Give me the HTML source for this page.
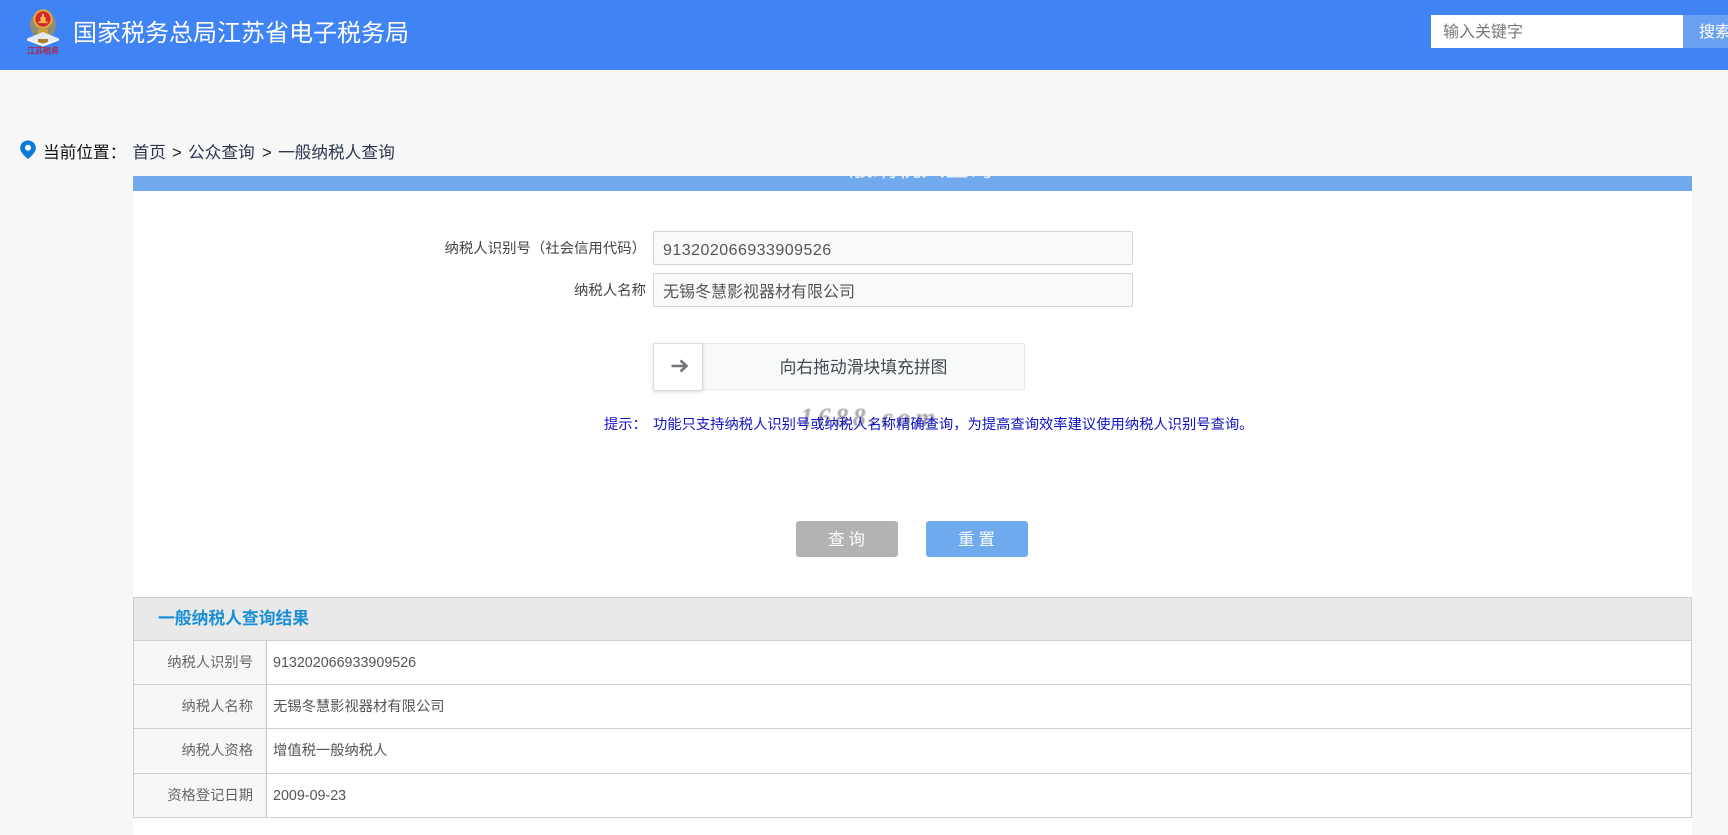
<!DOCTYPE html>
<html lang="zh-CN">
<head>
<meta charset="utf-8">
<title>一般纳税人查询</title>
<style>
*{box-sizing:border-box;margin:0;padding:0}
html,body{width:1728px;height:835px;overflow:hidden;background:#f7f7f7;font-family:"Liberation Sans","Noto Sans CJK SC",sans-serif}
.a{position:absolute;white-space:nowrap}
.header{left:0;top:0;width:1728px;height:70px;background:#4083f4}
.title{left:73px;top:19px;height:30px;line-height:30px;font-size:24px;color:#fff}
.search{left:1431px;top:15px;width:252px;height:33px;background:#fff;color:#777;font-size:16px;line-height:35px;padding-left:12px}
.sbtn{left:1683px;top:15px;width:45px;height:33px;background:#6aa0f0;color:#fff;font-size:16px;line-height:35px;padding-left:16px;overflow:hidden}
.crumb{top:141px;height:24px;line-height:24px;font-size:16.7px;color:#2c3550}
.panel{left:133px;top:176px;width:1559px;height:659px;background:#fff}
.bar{left:133px;top:176px;width:1559px;height:15px;background:#70aaec;overflow:hidden}
.bar span{position:absolute;left:692px;top:-22px;font-size:24px;line-height:30px;color:#fff;white-space:nowrap;opacity:.85}
.lbl{font-size:14.4px;color:#444;height:20px;line-height:20px;text-align:right;right:1082px}
.inp{left:653px;width:480px;height:34px;background:#f9f9f9;border:1px solid #d4d4d4;border-radius:2px;font-size:16px;line-height:37px;color:#555;padding-left:9px}
.slider{left:653px;top:343px;width:372px;height:47px;background:#f7f9fa;border:1px solid #e6e9ed}
.sltxt{left:702px;top:344px;width:323px;height:47px;line-height:47px;text-align:center;font-size:16.8px;color:#45494c}
.handle{left:653px;top:343px;width:50px;height:48px;background:#fff;border:1px solid #dcdcdc;border-radius:2px;box-shadow:0 1px 3px rgba(0,0,0,.16)}
.hint{top:415px;height:20px;line-height:20px;font-size:14.3px;color:#1212c4}
.wm{left:800px;top:405px;font:italic bold 26px/26px "Liberation Serif",serif;letter-spacing:4.6px;color:#a9a9a9;filter:blur(.5px)}
.btn{top:521px;width:102px;height:36px;border-radius:3px;color:#fff;font-size:16.4px;line-height:39px;text-align:center;letter-spacing:4px;padding-left:3px}
.rhead{left:133px;top:597px;width:1559px;height:44px;background:#e9e9e9;border:1px solid #cfcfcf;line-height:42px;font-size:16.8px;font-weight:bold;color:#1b8fd6;padding-left:24px}
.row{left:133px;width:1559px;border:1px solid #cfcfcf;border-top:0}
.row .k{position:absolute;left:0;top:0;bottom:0;width:133px;background:#f7f7f7;border-right:1px solid #c4c4c4;text-align:right;padding-right:13px;color:#666;font-size:14.3px}
.row .v{position:absolute;left:139px;top:0;bottom:0;color:#555;font-size:14.3px}
</style>
</head>
<body>
<div class="a header"></div>
<svg class="a" style="left:24px;top:6px" width="40" height="50" viewBox="0 0 40 50">
  <path d="M6 19c0-5 2-8 5-10h16c3 2 5 5 5 10 0 6-3 10-7 12H13c-4-2-7-6-7-12z" fill="#8f8d76"/>
  <circle cx="19" cy="13" r="9.800" fill="#dca93a"/>
  <circle cx="19" cy="13" r="7.600" fill="#d9262c"/>
  <path d="M14.500 15.500h9v1.600h-9zM16.500 11h5v4.500h-5zM18 8h2v3h-2z" fill="#eebf4a"/>
  <path d="M14 23h10v5H14z" fill="#c9a03a"/>
  <path d="M3 32.500L19 26l16 6.500-16 5.500z" fill="#e6ebf3"/>
  <path d="M3 32.500L19 38l16-5.500v2L19 40.500 3 34.500z" fill="#fff"/>
  <path d="M14 33h10v3l-5 1.600-5-1.600z" fill="#a9812e"/>
  <text x="19" y="47.500" text-anchor="middle" font-family="'Liberation Sans','Noto Sans CJK SC',sans-serif" font-size="8" font-weight="bold" fill="#a92a45">江苏税务</text>
</svg>
<div class="a title">国家税务总局江苏省电子税务局</div>
<div class="a search">输入关键字</div>
<div class="a sbtn">搜索</div>

<svg class="a" style="left:19px;top:140px" width="18" height="20" viewBox="0 0 18 20">
  <path d="M9 .5C4.500.5 1.200 3.800 1.200 8c0 4.800 5.400 9 7.800 11 2.400-2 7.800-6.200 7.800-11C16.800 3.800 13.500.5 9 .5z" fill="#0a7ad6"/>
  <circle cx="9" cy="7.800" r="3" fill="#fff"/>
</svg>
<div class="a crumb" style="left:43px;color:#111">当前位置：</div>
<div class="a crumb" style="left:132.500px">首页</div>
<div class="a crumb" style="left:172px;color:#222">&gt;</div>
<div class="a crumb" style="left:188px">公众查询</div>
<div class="a crumb" style="left:262px;color:#222">&gt;</div>
<div class="a crumb" style="left:278px">一般纳税人查询</div>

<div class="a panel"></div>
<div class="a bar"><span>一般纳税人查询</span></div>

<div class="a lbl" style="top:239px">纳税人识别号（社会信用代码）</div>
<div class="a inp" style="top:231px;letter-spacing:.47px">913202066933909526</div>
<div class="a lbl" style="top:281px">纳税人名称</div>
<div class="a inp" style="top:273px">无锡冬慧影视器材有限公司</div>

<div class="a slider"></div>
<div class="a sltxt">向右拖动滑块填充拼图</div>
<div class="a handle"></div>
<svg class="a" style="left:670px;top:357px" width="20" height="18" viewBox="0 0 20 18">
  <path d="M1.500 9H16M10.500 3.500L16.500 9l-6 5.500" fill="none" stroke="#707478" stroke-width="2.600"/>
</svg>

<div class="a wm">1688.com</div>
<div class="a hint" style="left:604px">提示：</div>
<div class="a hint" style="left:653px">功能只支持纳税人识别号或纳税人名称精确查询，为提高查询效率建议使用纳税人识别号查询。</div>

<div class="a btn" style="left:796px;background:#b3b3b3">查询</div>
<div class="a btn" style="left:926px;background:#6fa9ee">重置</div>

<div class="a rhead">一般纳税人查询结果</div>
<div class="a row" style="top:641px;height:44px;line-height:45px"><div class="k">纳税人识别号</div><div class="v">913202066933909526</div></div>
<div class="a row" style="top:685px;height:44px;line-height:45px"><div class="k">纳税人名称</div><div class="v">无锡冬慧影视器材有限公司</div></div>
<div class="a row" style="top:729px;height:45px;line-height:45px"><div class="k">纳税人资格</div><div class="v">增值税一般纳税人</div></div>
<div class="a row" style="top:774px;height:44px;line-height:45px"><div class="k">资格登记日期</div><div class="v">2009-09-23</div></div>
</body>
</html>
